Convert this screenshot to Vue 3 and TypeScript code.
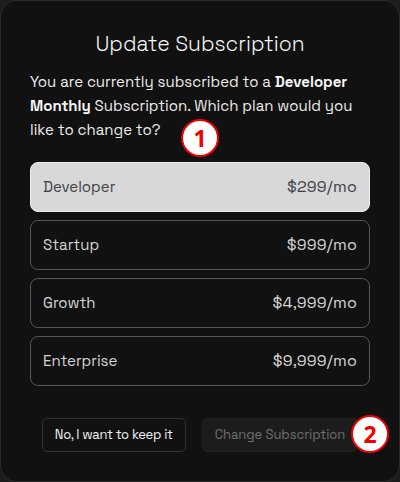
<script setup lang="ts">
interface Plan { name: string; price: string; selected?: boolean }
const plans: Plan[] = [
  { name: 'Developer', price: '$299/mo', selected: true },
  { name: 'Startup', price: '$999/mo' },
  { name: 'Growth', price: '$4,999/mo' },
  { name: 'Enterprise', price: '$9,999/mo' },
]
</script>

<template>
  <div class="dialog">
    <h2 class="title">Update Subscription</h2>
    <p class="desc">You are currently subscribed to a <b>Developer Monthly</b> Subscription. Which plan would you like to change to?</p>
    <div class="plans">
      <div v-for="p in plans" :key="p.name" class="plan" :class="{ selected: p.selected }">
        <span>{{ p.name }}</span>
        <span class="price">{{ p.price }}</span>
      </div>
    </div>
    <div class="actions">
      <button class="btn keep">No, I want to keep it</button>
      <button class="btn change" disabled>Change Subscription</button>
    </div>
    <span class="marker m1">1</span>
    <span class="marker m2">2</span>
  </div>
</template>

<style>
html, body { margin: 0; background: #1c1c1c; }
</style>

<style scoped>
.dialog {
  position: relative;
  box-sizing: border-box;
  width: 400px;
  height: 482px;
  padding: 29px 29px 0;
  background: #111111;
  border: 1px solid #2b2b2b;
  border-radius: 16px;
  font-family: "Space Grotesk", Inter, "Noto Sans", sans-serif;
  color: #ececec;
}
.title {
  margin: 0;
  font-size: 21px;
  line-height: 28px;
  font-weight: 300;
  text-align: center;
  color: #f8f8f8;
}
.desc {
  margin: 12px 0 0;
  font-size: 15px;
  line-height: 24px;
  color: #ececec;
}
.desc b { font-weight: 700; color: #f6f6f6; }
.plans {
  display: flex;
  flex-direction: column;
  gap: 8px;
  margin-top: 20px;
}
.plan {
  box-sizing: border-box;
  height: 50px;
  padding: 0 12px 2px;
  display: flex;
  align-items: center;
  justify-content: space-between;
  border: 1px solid #555555;
  border-radius: 8px;
  font-size: 15px;
  font-weight: 400;
  color: #d6d6d6;
}
.price { font-size: 16px; letter-spacing: 0.2px; }
.plan.selected {
  background: #d8d8d8;
  border-color: #f0f0f0;
  color: #3f3f46;
}
.actions {
  display: flex;
  justify-content: center;
  gap: 16px;
  margin-top: 32px;
}
.btn {
  box-sizing: border-box;
  height: 34px;
  padding: 0 12px 2px;
  border-radius: 5px;
  font-family: inherit;
  font-size: 13px;
}
.keep {
  background: transparent;
  border: 1px solid #333333;
  color: #f2f2f2;
  letter-spacing: -0.3px;
}
.change {
  background: #1c1c1c;
  border: 1px solid #232323;
  color: #707070;
  letter-spacing: -0.05px;
}
.marker {
  position: absolute;
  box-sizing: border-box;
  width: 38px;
  height: 38px;
  display: flex;
  align-items: center;
  justify-content: center;
  background: #ffffff;
  border: 2px solid #f00000;
  border-radius: 50%;
  color: #f00000;
  font-family: "Open Sans", sans-serif;
  font-size: 23px;
  font-weight: 700;
}
.m1 { left: 180px; top: 118px; }
.m2 { left: 350px; top: 414px; }
</style>
